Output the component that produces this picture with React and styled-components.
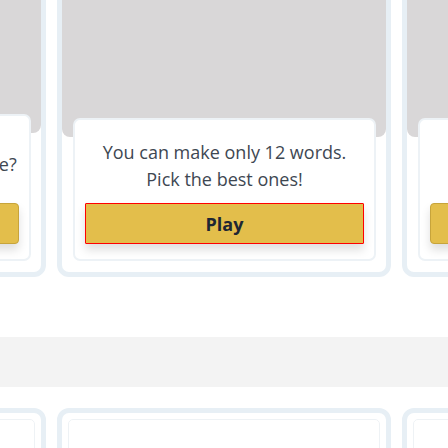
import React from 'react';
import styled, { createGlobalStyle } from 'styled-components';

const Global = createGlobalStyle`
  html, body { margin: 0; padding: 0; background: #ffffff; }
  body { font-family: "Open Sans", "Liberation Sans", sans-serif; }
  * { box-sizing: border-box; }
`;

const Page = styled.div`
  width: 448px;
  height: 448px;
  overflow: hidden;
  display: flex;
  flex-direction: column;
`;

const Track = styled.div`
  display: flex;
  justify-content: center;
  gap: 11px;
  margin-top: ${p => p.$mt}px;
`;

const Card = styled.div`
  flex: 0 0 334px;
  height: 320px;
  border: 5px solid #e7eff5;
  border-radius: 12px;
  display: flex;
  flex-direction: column;
  overflow: hidden;
  background: #ffffff;
`;

const Cover = styled.div`
  flex: 1 1 auto;
  background: #d9d7d8;
  border-radius: 0 0 8px 8px;
`;

const Panel = styled.div`
  margin: -19px 10px 11px 11px;
  background: #ffffff;
  border: 2px solid #edf2f6;
  border-radius: 7px;
  padding: 0 10px 15px;
  display: flex;
  flex-direction: column;
`;

const Prompt = styled.p`
  margin: 0;
  padding: ${p => p.$pad};
  font-size: 18px;
  line-height: 27px;
  color: #3e4752;
  text-align: center;
  white-space: nowrap;
`;

const PlayButton = styled.button`
  height: 41px;
  width: 100%;
  background: #e3be4b;
  border: 1px solid ${p => (p.$active ? '#ff0000' : '#c7a43b')};
  border-radius: ${p => (p.$active ? '1px' : '4px')};
  box-shadow: 0 6px 10px rgba(0, 0, 0, 0.13);
  font-family: "Open Sans", "Liberation Sans", sans-serif;
  font-weight: 700;
  font-size: 18px;
  color: #1e2733;
  cursor: pointer;
  padding: 0;
`;

const Band = styled.div`
  margin-top: 60px;
  height: 50px;
  background: #f3f3f3;
  flex: 0 0 auto;
`;

const Thumb = styled.div`
  margin: 6px;
  height: 220px;
  border: 1px solid #eef2f5;
  border-radius: 5px;
`;

const games = [
  { lines: ['How many words can you make?'], pad: '35px 0 25px' },
  { lines: ['You can make only 12 words.', 'Pick the best ones!'], pad: '19px 0 10px', active: true },
  { lines: ['Race the clock.', 'Go!'], pad: '19px 0 10px' },
];

export default function App() {
  return (
    <>
      <Global />
      <Page>
        <Track $mt={-43}>
          {games.map((g, i) => (
            <Card key={i}>
              <Cover />
              <Panel>
                <Prompt $pad={g.pad}>
                  {g.lines.map((l, j) => (
                    <React.Fragment key={j}>
                      {j > 0 && <br />}
                      {l}
                    </React.Fragment>
                  ))}
                </Prompt>
                <PlayButton $active={g.active}>Play</PlayButton>
              </Panel>
            </Card>
          ))}
        </Track>
        <Band />
        <Track $mt={21}>
          {[0, 1, 2].map(i => (
            <Card key={i}>
              <Thumb />
            </Card>
          ))}
        </Track>
      </Page>
    </>
  );
}
